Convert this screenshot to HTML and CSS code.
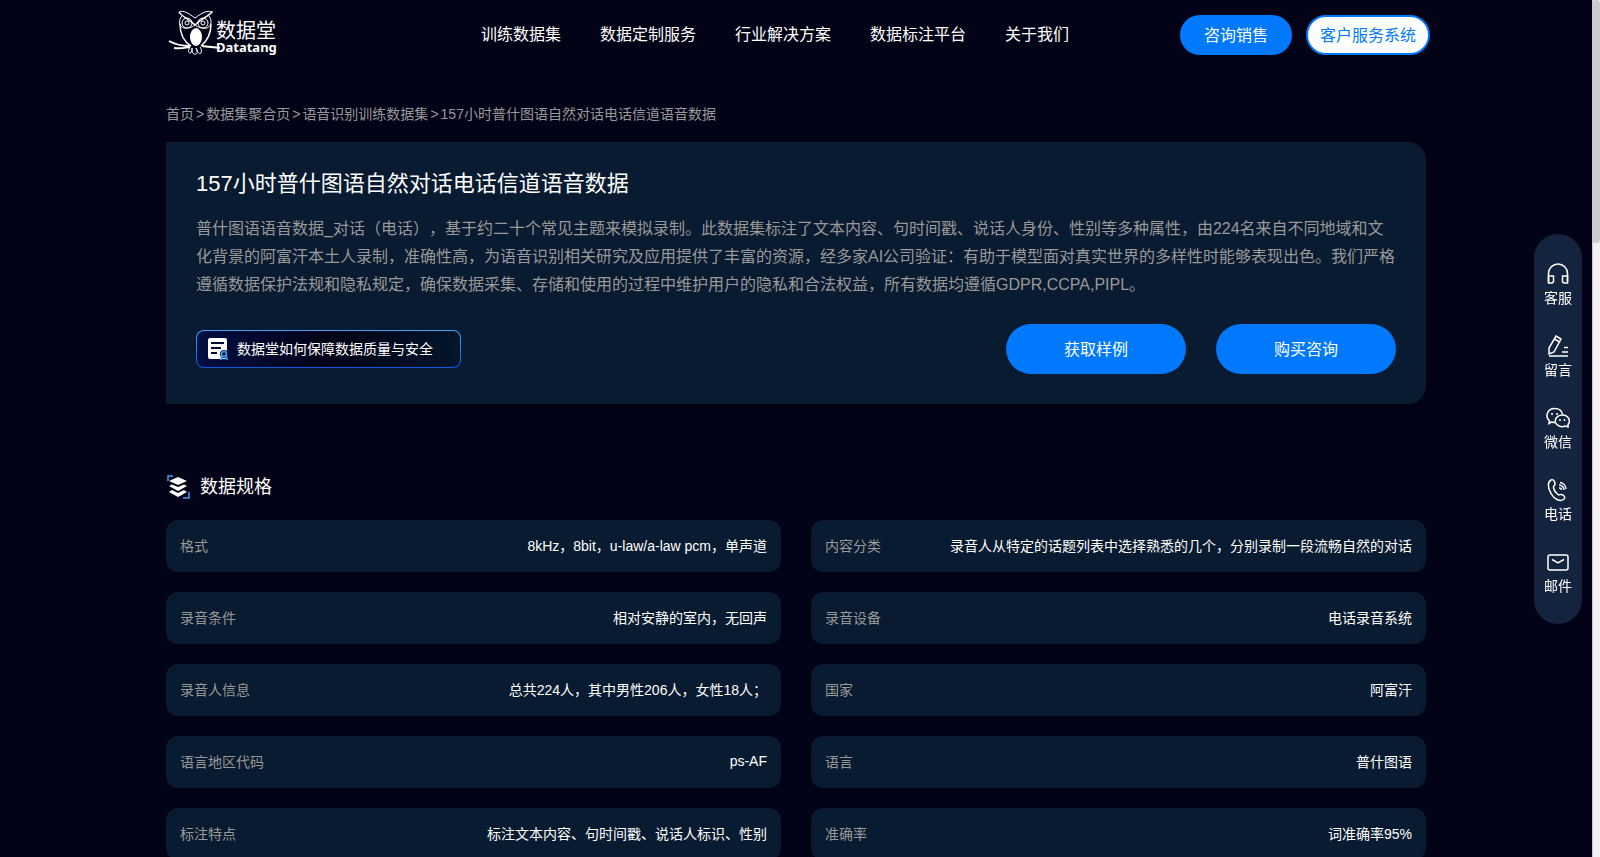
FILE: index.html
```
<!DOCTYPE html>
<html lang="zh-CN">
<head>
  <meta charset="UTF-8" />
  <meta name="viewport" content="width=device-width, initial-scale=1" />
  <title>157小时普什图语自然对话电话信道语音数据 - 数据堂</title>
  <link rel="stylesheet" href="styles.css">
</head>
<body>
  <header class="header">
    <a class="logo" href="#" aria-label="数据堂 Datatang">
      <svg class="owl" viewBox="0 0 52 46" fill="none" stroke="#fff" stroke-width="1">
        <path d="M11 2 C16 0 20 3 27 8 C34 3 38 0 45 2" />
        <path d="M11 2 C13 6 20 8 27 15 C34 8 41 6 44 2" stroke-width="1.5" />
        <path d="M14 6 C10 10 11 17 16 18 C21 19 26 16 27 15 C29 17 35 19 39 18 C44 16 44 10 41 6" />
        <path d="M12 14 C12 24 15 31 23 36 M43 14 C43 24 39 31 33 36" stroke-width="1.5" />
        <circle cx="19" cy="13" r="5" />
        <circle cx="19" cy="13" r="2" />
        <circle cx="35" cy="13" r="5" />
        <circle cx="35" cy="13" r="2" />
        <ellipse cx="28" cy="27" rx="6" ry="9" fill="#fff" stroke="none" />
        <path d="M1 31 C8 35 14 36 22 36 M6 38 C12 39 16 38 22 37 M34 36 C40 37 46 37 52 38" stroke-width="2" />
        <path d="M22 37 C20 40 20 43 22 43 C24 43 24 39 24 38 C24 42 25 45 28 44 C30 43 29 39 28 38 C29 41 31 45 33 43 C34 41 33 38 32 37" />
      </svg>
      <span class="logo-text">
        <span class="logo-cn">数据堂</span>
        <span class="logo-en">Datatang</span>
      </span>
    </a>
    <nav class="nav-links">
      <a href="#">训练数据集</a>
      <a href="#">数据定制服务</a>
      <a href="#">行业解决方案</a>
      <a href="#">数据标注平台</a>
      <a href="#">关于我们</a>
    </nav>
    <div class="header-btns">
      <button class="btn btn-sales" type="button">咨询销售</button>
      <button class="btn btn-service" type="button">客户服务系统</button>
    </div>
  </header>

  <main>
    <div class="breadcrumb">
      <a href="#">首页</a><span>&gt;</span><a href="#">数据集聚合页</a><span>&gt;</span><a href="#">语音识别训练数据集</a><span>&gt;</span><a href="#">157小时普什图语自然对话电话信道语音数据</a>
    </div>

    <section class="intro">
      <h1>157小时普什图语自然对话电话信道语音数据</h1>
      <p>普什图语语音数据_对话（电话），基于约二十个常见主题来模拟录制。此数据集标注了文本内容、句时间戳、说话人身份、性别等多种属性，由224名来自不同地域和文化背景的阿富汗本土人录制，准确性高，为语音识别相关研究及应用提供了丰富的资源，经多家AI公司验证：有助于模型面对真实世界的多样性时能够表现出色。我们严格遵循数据保护法规和隐私规定，确保数据采集、存储和使用的过程中维护用户的隐私和合法权益，所有数据均遵循GDPR,CCPA,PIPL。</p>
      <div class="intro-bottom">
        <a class="quality" href="#">
          <svg width="20" height="22" viewBox="0 0 20 22">
            <rect x="0" y="0" width="19" height="21" rx="2" fill="#fff" />
            <path d="M3 5H16M3 10H13M3 15H9" stroke="#020a34" stroke-width="2" />
            <circle cx="16" cy="16" r="4" fill="#04103c" />
            <circle cx="16" cy="16" r="2.5" fill="none" stroke="#3ea2f7" stroke-width="1.6" />
            <path d="M14 18L13 21L15 20.5M18 18L19 21L17 20.5" fill="none" stroke="#3ea2f7" stroke-width="1.6" />
          </svg>
          <span>数据堂如何保障数据质量与安全</span>
        </a>
        <div class="intro-btns">
          <button class="btn btn-big" type="button">获取样例</button>
          <button class="btn btn-big" type="button">购买咨询</button>
        </div>
      </div>
    </section>

    <section class="spec">
      <h2>
        <svg width="24" height="24" viewBox="0 0 24 24">
          <path d="M2 6V1H7M17 23H23V17" fill="none" stroke="#3ea2f7" stroke-width="1.5" />
          <path d="M12 2L21 6L12 10L3 6Z" fill="#fff" />
          <path d="M3 11L6 9.500L12 12L18 9.500L21 11L12 16Z" fill="#fff" />
          <path d="M3 17L6 15L12 18L18 15L21 17L12 22Z" fill="#fff" />
        </svg>
        数据规格
      </h2>
      <dl class="spec-list">
        <div class="spec-item"><dt>格式</dt><dd>8kHz，8bit，u-law/a-law pcm，单声道</dd></div>
        <div class="spec-item"><dt>内容分类</dt><dd>录音人从特定的话题列表中选择熟悉的几个，分别录制一段流畅自然的对话</dd></div>
        <div class="spec-item"><dt>录音条件</dt><dd>相对安静的室内，无回声</dd></div>
        <div class="spec-item"><dt>录音设备</dt><dd>电话录音系统</dd></div>
        <div class="spec-item"><dt>录音人信息</dt><dd>总共224人，其中男性206人，女性18人；</dd></div>
        <div class="spec-item"><dt>国家</dt><dd>阿富汗</dd></div>
        <div class="spec-item"><dt>语言地区代码</dt><dd>ps-AF</dd></div>
        <div class="spec-item"><dt>语言</dt><dd>普什图语</dd></div>
        <div class="spec-item"><dt>标注特点</dt><dd>标注文本内容、句时间戳、说话人标识、性别</dd></div>
        <div class="spec-item"><dt>准确率</dt><dd>词准确率95%</dd></div>
      </dl>
    </section>
  </main>

  <aside class="sidebar">
    <a href="#">
      <svg viewBox="0 0 24 24">
        <path d="M2.500 20V11.500A9.500 9.500 0 0 1 21.500 11.500V20" />
        <path d="M2.500 14H7.500V19A2 2 0 0 1 5.500 21H2.500ZM21.500 14H16.500V19A2 2 0 0 0 18.500 21H21.500Z" />
      </svg>
      客服
    </a>
    <a href="#">
      <svg viewBox="0 0 24 24">
        <path d="M3 22H22M16 18H22M18 13.500H22" />
        <path d="M10 2L15 5L8 18L3 20L3 14ZM8.500 5L13.500 8" />
      </svg>
      留言
    </a>
    <a href="#">
      <svg viewBox="0 0 24 24">
        <path d="M9 16.500C7.500 16.500 6.500 16.300 5.500 16L3 17.500L3.500 15C-1.500 10.500 1.500 2.500 8.500 2.500C13 2.500 16 5 16.500 8.500" />
        <path d="M22 18.500C25 15 22.500 9 16.500 9C11 9 8.500 13 9.500 16.500C11 20.500 15.500 21.500 19.500 20L22 21Z" />
        <path d="M6 7V9M11 7V9M14 13V15M18.500 13V15" />
      </svg>
      微信
    </a>
    <a href="#">
      <svg viewBox="0 0 24 24">
        <path d="M5 2C7 1 8 2 9 5C9.500 7.500 7 8 7.500 10C8 12.500 10 15 12 16.500C14 17.500 14.500 15.500 17 17C19.500 19 19 20 17.500 21.500C14 24 8 21 5 15.500C1.500 9.500 1.500 4 5 2Z" />
        <path d="M13 10A2 2 0 0 1 15.500 12M13 7A5 5 0 0 1 18 12M14 4.500A7 7 0 0 1 20 11" />
      </svg>
      电话
    </a>
    <a href="#">
      <svg viewBox="0 0 24 24">
        <rect x="2" y="5" width="20" height="15" rx="2" />
        <path d="M6 9.500L12 13L18 9.500" />
      </svg>
      邮件
    </a>
  </aside>

  <div class="scroll-track"><div class="scroll-thumb"></div></div>
</body>
</html>
```
FILE: styles.css
```
* {
  box-sizing: border-box;
  margin: 0;
  padding: 0;
}
html {
  scrollbar-width: none;
}
body {
  padding-right: 8px;
  font-family: "Liberation Sans", "Noto Sans CJK SC", sans-serif;
  font-size: 14px;
  background-color: #020316;
  color: #fff;
  text-spacing-trim: space-all;
}
a {
  color: inherit;
  text-decoration: none;
}
.header {
  display: flex;
  align-items: center;
  max-width: 1268px;
  height: 70px;
  margin: 0 auto;
  padding-left: 6px;
}
.logo {
  display: flex;
  align-items: center;
  width: 313px;
  padding-bottom: 4px;
}
.owl {
  width: 52px;
  height: 46px;
}
.logo-text {
  display: flex;
  flex-direction: column;
  margin-left: -4px;
  padding-top: 8px;
}
.logo-cn {
  font-size: 20px;
  line-height: 20px;
}
.logo-en {
  font-family: "Noto Sans", sans-serif;
  font-size: 13px;
  font-weight: bold;
  line-height: 12px;
}
.nav-links {
  display: flex;
  gap: 39px;
  padding-bottom: 4px;
  font-size: 16px;
}
.header-btns {
  display: flex;
  gap: 14px;
  margin-left: auto;
}
.btn {
  height: 40px;
  padding-bottom: 2px;
  border: none;
  border-radius: 20px;
  background-color: #0079fe;
  color: #fff;
  font-family: inherit;
  font-size: 16px;
  cursor: pointer;
}
.btn-sales {
  width: 112px;
}
.btn-service {
  width: 124px;
  border: 2px solid #0079fe;
  background-color: #fff;
  color: #0079fe;
}
.btn-big {
  width: 180px;
  height: 50px;
  border-radius: 25px;
}
main {
  max-width: 1260px;
  margin: 0 auto;
  padding: 32px 0 60px;
}
.breadcrumb {
  line-height: 24px;
  color: #999;
}
.breadcrumb span {
  margin: 0 2px;
}
.intro {
  margin-top: 16px;
  padding: 30px;
  border-radius: 0 18px 18px 0;
  background-color: #091b30;
  box-shadow: 0 0 12px rgba(0, 0, 0, 0.4);
}
.intro h1 {
  font-size: 22px;
  font-weight: normal;
  line-height: 24px;
}
.intro p {
  margin-top: 19px;
  font-size: 16px;
  line-height: 28px;
  color: #999;
}
.intro-bottom {
  display: flex;
  justify-content: space-between;
  align-items: center;
  margin-top: 25px;
}
.intro-btns {
  display: flex;
  gap: 30px;
}
.quality {
  display: flex;
  align-items: center;
  gap: 9px;
  width: 265px;
  height: 38px;
  padding-left: 11px;
  border: 1px solid transparent;
  border-radius: 8px;
  background:
    linear-gradient(90deg, #020e42, #020316 50%, #03162c) padding-box,
    linear-gradient(#3ea2f7, #0f56dd) border-box;
}
.quality span {
  padding-bottom: 2px;
}
.spec {
  margin-top: 70px;
}
.spec h2 {
  display: flex;
  align-items: center;
  gap: 10px;
  height: 26px;
  font-size: 18px;
  font-weight: normal;
  line-height: 26px;
}
.spec-list {
  display: grid;
  grid-template-columns: 1fr 1fr;
  gap: 20px 30px;
  margin-top: 20px;
}
.spec-item {
  display: flex;
  justify-content: space-between;
  align-items: center;
  height: 52px;
  padding: 0 14px 2px;
  border-radius: 12px;
  background-color: #091b30;
}
.spec-item dt {
  color: #999;
}
.sidebar {
  position: fixed;
  top: 50%;
  right: 18px;
  display: flex;
  flex-direction: column;
  gap: 24px;
  width: 48px;
  padding: 28px 0 26px;
  border-radius: 24px;
  background-color: #14243f;
  transform: translateY(-50%);
}
.sidebar a {
  display: flex;
  flex-direction: column;
  align-items: center;
  line-height: 24px;
}
.sidebar svg {
  width: 24px;
  height: 24px;
  fill: none;
  stroke: #fff;
  stroke-width: 1.5;
}
.scroll-track {
  position: fixed;
  top: 0;
  right: 0;
  bottom: 0;
  width: 8px;
  border-left: 1px solid #ccc;
  background-color: #f1f1f1;
}
.scroll-thumb {
  height: 243px;
  margin-left: -1px;
  border-radius: 6px;
  background-color: #ccc;
}
```
